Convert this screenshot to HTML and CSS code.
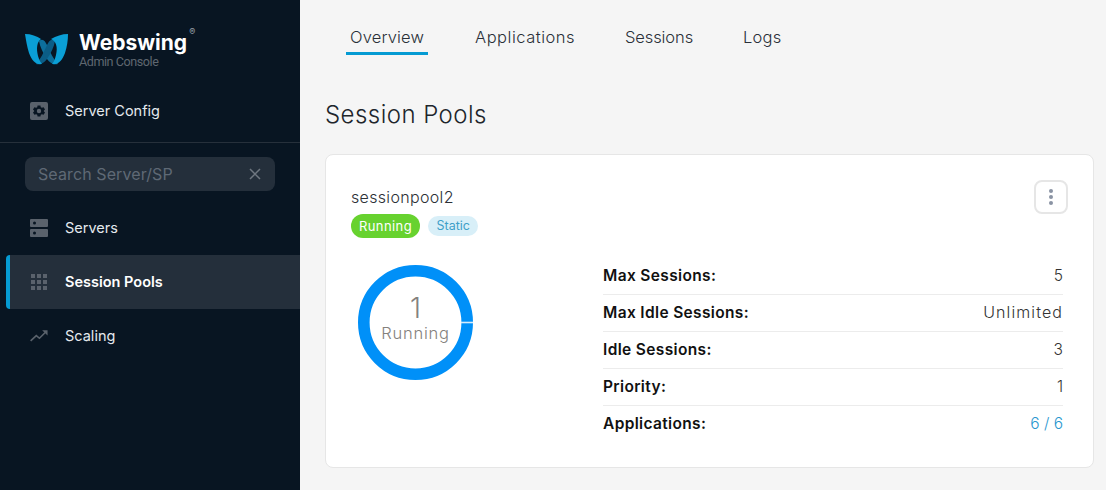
FILE: index.html
```html
<!DOCTYPE html>
<html lang="en">
<head>
    <meta charset="UTF-8">
    <meta name="viewport" content="width=device-width, initial-scale=1.0">
    <title>Webswing Admin Console</title>
    <link rel="stylesheet" href="styles.css">
</head>
<body>
    <aside class="sidebar">
        <div class="brand">
            <svg class="brand-logo" width="44" height="32" viewBox="0 0 44 32">
                <path fill="#0d6f9c" d="M14 8 C18 5 20 8 22 12 C25 19 29 27 33 31 C28 32 25 30 22 26 C18 20 15 14 14 8Z"/>
                <path fill="#0b5d86" d="M30 8 C26 5 24 8 22 12 C19 19 15 27 11 31 C16 32 19 30 22 26 C26 20 29 14 30 8Z"/>
                <path fill="#0a9fd6" d="M0 1 C6 1 12 3 16 6 C12 9 11 15 13 23 C14 26 15 29 17 31 C11 32 7 28 4 20 C2 14 1 7 0 1Z"/>
                <path fill="#0a9fd6" d="M43 1 C37 1 31 3 26 6 C31 8 33 14 31 22 C30 26 29 29 27 31 C33 32 37 28 40 20 C42 14 43 7 43 1Z"/>
            </svg>
            <div class="brand-text">
                <div class="brand-name">Webswing<sup>®</sup></div>
                <div class="brand-sub">Admin Console</div>
            </div>
        </div>

        <a class="nav-item">
            <svg class="nav-icon" width="18" height="18" viewBox="0 0 18 18">
                <path fill="#5a626c" fill-rule="evenodd" d="M2 0h14a2 2 0 0 1 2 2v14a2 2 0 0 1-2 2H2a2 2 0 0 1-2-2V2a2 2 0 0 1 2-2Zm5.6 3.5-.4 1.7-1.1.6-1.7-.5L3 7.6l1.2 1.2v.4L3 10.400l1.400 2.300 1.700-.5 1.100.6.400 1.700h2.800l.4-1.700 1.100-.6 1.700.5 1.400-2.300-1.200-1.200v-.4L15 7.600l-1.400-2.300-1.700.5-1.100-.6-.4-1.700H7.600ZM9 6.800a2.200 2.200 0 1 1 0 4.400 2.200 2.200 0 0 1 0-4.400Z"/>
            </svg>
            <span class="nav-label">Server Config</span>
        </a>

        <div class="search-wrap">
            <div class="search">
                <span>Search Server/SP</span>
                <svg width="14" height="14" viewBox="0 0 14 14"><path stroke="#6f7780" stroke-width="1.500" d="M2 2l10 10M12 2 2 12"/></svg>
            </div>
        </div>

        <nav>
            <a class="nav-item">
                <svg class="nav-icon" width="18" height="18" viewBox="0 0 18 18">
                    <path fill="#5a626c" fill-rule="evenodd" d="M1 0h16a1 1 0 0 1 1 1v6a1 1 0 0 1-1 1H1a1 1 0 0 1-1-1V1a1 1 0 0 1 1-1Zm3.500 2.500a1.500 1.500 0 1 0 0 3 1.500 1.500 0 0 0 0-3ZM1 10h16a1 1 0 0 1 1 1v6a1 1 0 0 1-1 1H1a1 1 0 0 1-1-1v-6a1 1 0 0 1 1-1Zm3.500 2.500a1.500 1.500 0 1 0 0 3 1.500 1.500 0 0 0 0-3Z"/>
                </svg>
                <span class="nav-label">Servers</span>
            </a>
            <a class="nav-item active">
                <svg class="nav-icon" width="18" height="18" viewBox="0 0 18 18" fill="#5a626c">
                    <rect x="1" y="1" width="4" height="4"/><rect x="7" y="1" width="4" height="4"/><rect x="13" y="1" width="4" height="4"/>
                    <rect x="1" y="7" width="4" height="4"/><rect x="7" y="7" width="4" height="4"/><rect x="13" y="7" width="4" height="4"/>
                    <rect x="1" y="13" width="4" height="4"/><rect x="7" y="13" width="4" height="4"/><rect x="13" y="13" width="4" height="4"/>
                </svg>
                <span class="nav-label">Session Pools</span>
            </a>
            <a class="nav-item">
                <svg class="nav-icon" width="20" height="14" viewBox="0 0 20 14" fill="none">
                    <path stroke="#5a626c" stroke-width="1.800" d="M.7 12.500 7 6.500l3.500 3L18 2"/>
                    <path fill="#5a626c" d="M13.500 .5H19.500V6.500Z"/>
                </svg>
                <span class="nav-label">Scaling</span>
            </a>
        </nav>
    </aside>

    <main class="content">
        <div class="tabs">
            <a class="tab active">Overview</a>
            <a class="tab">Applications</a>
            <a class="tab">Sessions</a>
            <a class="tab">Logs</a>
        </div>

        <h1>Session Pools</h1>

        <section class="card">
            <div class="card-head">
                <div>
                    <h3>sessionpool2</h3>
                    <div class="tags">
                        <span class="tag running">Running</span>
                        <span class="tag static">Static</span>
                    </div>
                </div>
                <button class="menu-btn"><i></i><i></i><i></i></button>
            </div>

            <div class="card-body">
                <div class="donut">
                    <svg width="115" height="115" viewBox="0 0 115 115">
                        <circle cx="57.500" cy="57.500" r="51.700" fill="none" stroke="#0090f8" stroke-width="11.600"/>
                        <rect x="103" y="56.700" width="12" height="1.600" fill="#d6ecfb"/>
                    </svg>
                    <div class="donut-label">
                        <div class="donut-num">1</div>
                        <div class="donut-text">Running</div>
                    </div>
                </div>

                <div class="stats">
                    <div class="stat"><b>Max Sessions:</b><span>5</span></div>
                    <div class="stat"><b>Max Idle Sessions:</b><span class="wide">Unlimited</span></div>
                    <div class="stat"><b>Idle Sessions:</b><span>3</span></div>
                    <div class="stat"><b>Priority:</b><span>1</span></div>
                    <div class="stat"><b>Applications:</b><a>6 / 6</a></div>
                </div>
            </div>
        </section>
    </main>
</body>
</html>
```

FILE: styles.css
```css
* {
    box-sizing: border-box;
}
body {
    font-family: Inter, "Open Sans", sans-serif;
    margin: 0;
    height: 490px;
    overflow: hidden;
    display: flex;
    background-color: #f5f5f5;
    color: #222;
}
.sidebar {
    width: 300px;
    flex-shrink: 0;
    background-color: #081522;
    color: #fff;
}
.brand {
    display: flex;
    align-items: flex-start;
    height: 84px;
    padding: 30px 0 0 25px;
}
.brand-logo {
    margin-top: 3px;
    margin-right: 10px;
}
.brand-name {
    font-size: 21px;
    font-weight: 700;
    line-height: 26px;
}
.brand-name sup {
    font-size: 9px;
    font-weight: 400;
    color: #9aa1a9;
    vertical-align: top;
    line-height: 4px;
    margin-left: 2px;
}
.brand-sub {
    font-family: Roboto, sans-serif;
    font-size: 12.600px;
    letter-spacing: -.45px;
    line-height: 11px;
    color: #5f6770;
}
.nav-item {
    display: flex;
    align-items: center;
    height: 54px;
    margin-left: 6px;
    padding-left: 24px;
    font-size: 14.500px;
    color: #e4e9ee;
}
.nav-label {
    padding-bottom: 2px;
}
.nav-icon {
    width: 18px;
    margin-right: 17px;
    flex-shrink: 0;
}
.search-wrap {
    margin-top: 4px;
    border-top: 1px solid #26303b;
    padding: 14px 25px 10px;
}
.search {
    display: flex;
    align-items: center;
    justify-content: space-between;
    height: 34px;
    padding: 0 13px;
    background-color: #242f3b;
    border-radius: 8px;
    font-size: 16px;
    letter-spacing: .1px;
    color: #5f6975;
}
.nav-item.active {
    background-color: #242f3b;
    border-left: 4px solid #059bd3;
    border-radius: 4px 0 0 4px;
    padding-left: 20px;
    font-weight: 600;
    color: #fff;
}
.content {
    flex: 1;
    padding: 0 12px 0 25px;
}
.tabs {
    display: flex;
    gap: 42px;
    padding: 19px 0 0 21px;
}
.tab {
    padding: 0 4px;
    height: 36px;
    line-height: 36px;
    font-size: 16.500px;
    font-weight: 350;
    letter-spacing: .2px;
    color: #2a3038;
}
.tab.active {
    border-bottom: 3px solid #059bd3;
    margin-right: 1px;
    letter-spacing: .15px;
}
.tab:nth-child(2) {
    letter-spacing: .5px;
}
.tab:nth-child(3) {
    letter-spacing: -.1px;
}
h1 {
    margin: 42px 0 21px;
    font-size: 24px;
    line-height: 36px;
    font-weight: 350;
    letter-spacing: .45px;
    color: #20252b;
}
.card {
    height: 314px;
    background-color: #fff;
    border: 1px solid #e6e6e6;
    border-radius: 8px;
    padding: 26px 25px 0;
}
.card-head {
    display: flex;
    justify-content: space-between;
}
h3 {
    margin: 0;
    font-size: 16px;
    line-height: 33px;
    font-weight: 350;
    letter-spacing: .33px;
    color: #2c3036;
}
.tags {
    display: flex;
    align-items: center;
    gap: 8px;
}
.tag {
    border-radius: 12px;
    font-size: 12.500px;
}
.tag.running {
    height: 24px;
    line-height: 24px;
    padding: 0 8px;
    font-size: 13px;
    letter-spacing: .4px;
    background-color: #67d22f;
    color: #fff;
}
.tag.static {
    height: 20px;
    line-height: 20px;
    padding: 0 8.500px;
    background-color: #d8eff8;
    color: #3f9fc9;
}
.menu-btn {
    width: 34px;
    height: 34px;
    margin-top: -1px;
    display: flex;
    flex-direction: column;
    align-items: center;
    justify-content: center;
    gap: 2px;
    background-color: #fff;
    border: 2px solid #e6e6e6;
    border-radius: 8px;
    padding: 0;
}
.menu-btn i {
    width: 4px;
    height: 4px;
    border-radius: 50%;
    background-color: #8a93a3;
}
.card-body {
    display: flex;
    margin-top: 17px;
}
.donut {
    position: relative;
    width: 115px;
    height: 115px;
    margin: 10px 1px 0 7px;
}
.donut-label {
    position: absolute;
    inset: 0;
    display: flex;
    flex-direction: column;
    align-items: center;
    justify-content: center;
    padding-bottom: 9px;
    color: #84817d;
}
.donut-num {
    font-size: 28px;
    line-height: 29px;
    font-weight: 300;
}
.donut-text {
    font-size: 16.500px;
    line-height: 20px;
    font-weight: 350;
    letter-spacing: .8px;
}
.stats {
    width: 460px;
    margin-left: 129px;
    margin-top: 3px;
}
.stat {
    display: flex;
    justify-content: space-between;
    align-items: center;
    height: 37px;
    padding-bottom: 2px;
    font-size: 15.500px;
    border-bottom: 1px solid #ececec;
}
.stat:last-child {
    border-bottom: 0;
}
.stat b {
    font-weight: 600;
    letter-spacing: .35px;
    color: #111;
}
.stat span {
    font-weight: 350;
    color: #333;
}
.stat .wide {
    font-size: 16px;
    letter-spacing: 1.100px;
}
.stat a {
    color: #2a97cf;
    font-weight: 350;
}
```
